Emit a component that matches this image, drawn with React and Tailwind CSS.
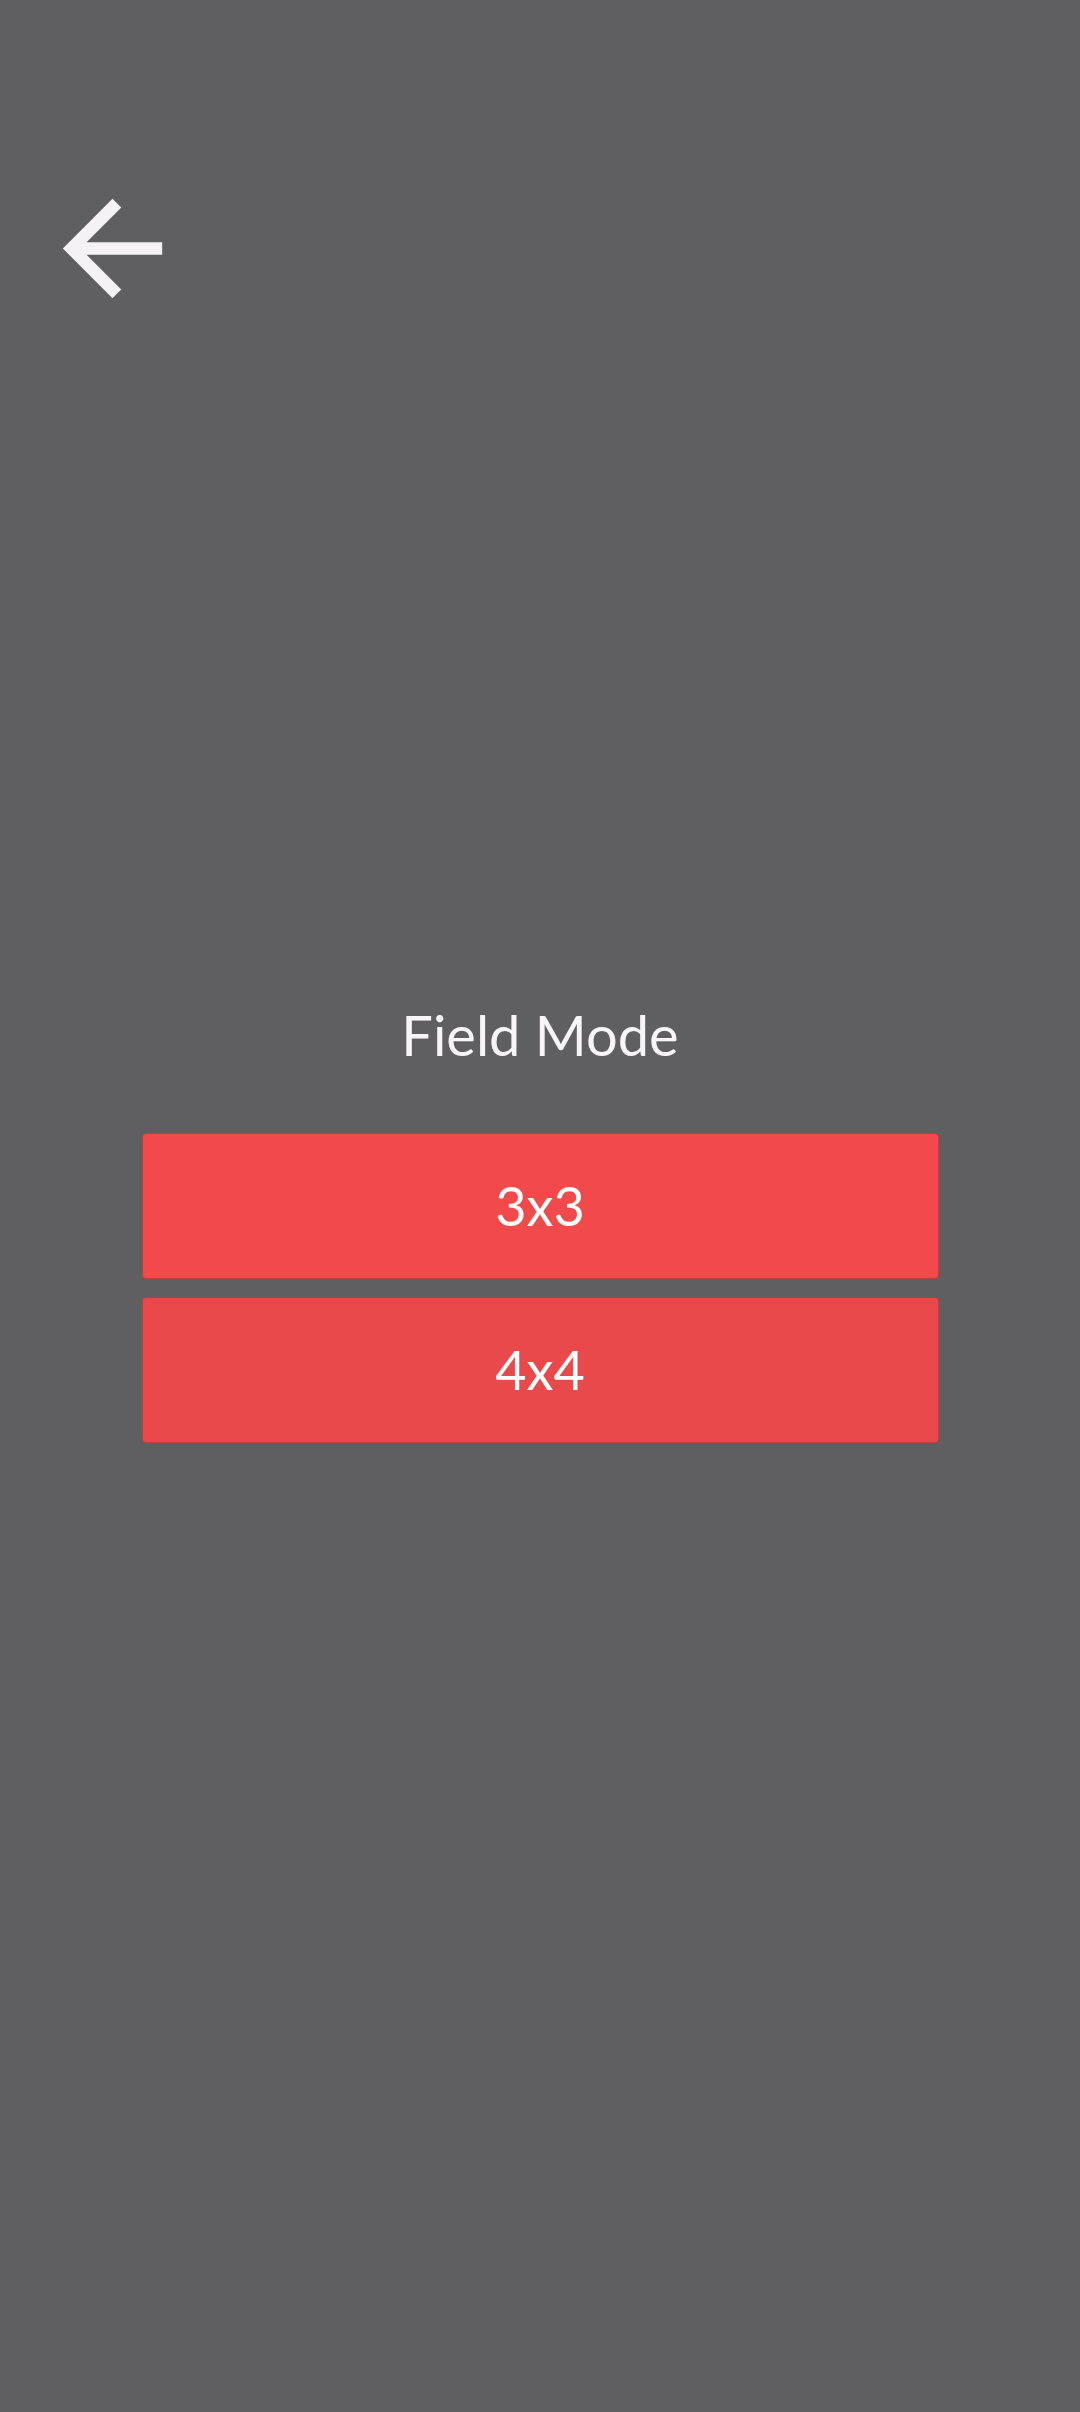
import React from "react";

function BackArrow() {
  return (
    <svg viewBox="0 0 24 24" className="w-[149px] h-[149px]" fill="#f4f2f5">
      <path d="M20 11H7.83l5.59-5.59L12 4l-8 8 8 8 1.41-1.41L7.83 13H20v-2z" />
    </svg>
  );
}

function ModeButton({ label, tone }) {
  return (
    <button
      className={`w-full h-[146px] flex items-center justify-center rounded-[4px] border border-[#c23c3c] text-white text-[54px] leading-none ${tone}`}
      style={{ fontFamily: "Lato, 'Liberation Sans', sans-serif" }}
    >
      {label}
    </button>
  );
}

export default function App() {
  return (
    <div
      className="min-h-screen w-full bg-[#5f5e60] flex flex-col"
      style={{ fontFamily: "Lato, 'Liberation Sans', sans-serif" }}
    >
      {/* header */}
      <div className="pl-[38px] pt-[174px]">
        <BackArrow />
      </div>

      <main className="mt-[684px] flex flex-col items-center">
        <h1 className="text-[56px] leading-none text-[#f7f5f7] font-normal">
          Field Mode
        </h1>
        <div className="mt-[70px] w-[797px] flex flex-col gap-[18px]">
          <ModeButton label="3x3" tone="bg-[#f24a4b]" />
          <ModeButton label="4x4" tone="bg-[#e9494a]" />
        </div>
      </main>
    </div>
  );
}
